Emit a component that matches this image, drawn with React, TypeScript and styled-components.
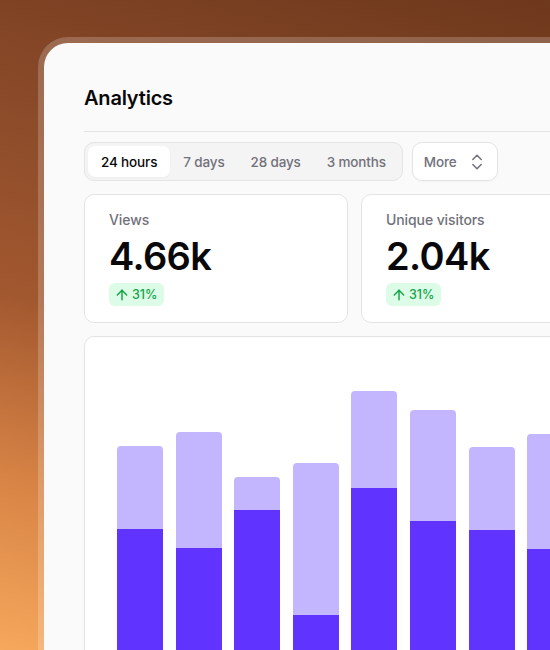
import React from "react";
import styled, { createGlobalStyle } from "styled-components";
import { ChevronsUpDown, ArrowUp } from "lucide-react";

const GlobalStyle = createGlobalStyle`
  html, body {
    margin: 0;
    padding: 0;
    width: 550px;
    height: 650px;
    overflow: hidden;
  }
  body {
    font-family: Inter, "Noto Sans", sans-serif;
    -webkit-font-smoothing: antialiased;
  }
`;

const Backdrop = styled.div`
  width: 550px;
  height: 650px;
  overflow: hidden;
  padding: 37px 0 0 38px;
  box-sizing: border-box;
  background: linear-gradient(
    195deg,
    #6e381c 0%,
    #8a4a29 30%,
    #a2582f 55%,
    #d78345 78%,
    #f6a85c 100%
  );
`;

const Frame = styled.div`
  width: 900px;
  padding: 6px 0 0 6px;
  border-radius: 30px 0 0 0;
  background: rgba(255, 255, 255, 0.2);
`;

const Panel = styled.div`
  background: #fafafa;
  border-radius: 24px 0 0 0;
  padding: 41px 0 0 40px;
  min-height: 700px;
`;

const Header = styled.div`
  padding-bottom: 19px;
  border-bottom: 1px solid #e4e4e7;
`;

const Title = styled.h1`
  margin: 0;
  font-size: 20px;
  line-height: 28px;
  font-weight: 600;
  color: #09090b;
  letter-spacing: -0.2px;
`;

const Toolbar = styled.div`
  display: flex;
  gap: 9px;
  margin-top: 10px;
`;

const Segmented = styled.div`
  display: flex;
  padding: 3px;
  border: 1px solid #e4e4e7;
  border-radius: 10px;
  background: #f4f4f5;
`;

const Tab = styled.button<{ $active?: boolean }>`
  height: 31px;
  padding: 0 13px;
  border: none;
  border-radius: 7px;
  font-family: inherit;
  font-size: 13.5px;
  font-weight: 500;
  letter-spacing: -0.15px;
  color: ${(p) => (p.$active ? "#09090b" : "#71717a")};
  background: ${(p) => (p.$active ? "#ffffff" : "transparent")};
  box-shadow: ${(p) => (p.$active ? "0 1px 2px rgba(0,0,0,0.04)" : "none")};
`;

const SelectButton = styled.button`
  display: flex;
  align-items: center;
  gap: 10px;
  height: 39px;
  padding: 0 10px 0 11px;
  border: 1px solid #e4e4e7;
  border-radius: 10px;
  background: #ffffff;
  font-family: inherit;
  font-size: 13.5px;
  font-weight: 500;
  letter-spacing: -0.15px;
  color: #71717a;
  box-shadow: 0 1px 2px rgba(0, 0, 0, 0.03);
`;

const Stats = styled.div`
  display: grid;
  grid-template-columns: repeat(2, 264px);
  gap: 13px;
  margin-top: 13px;
`;

const StatCard = styled.div`
  background: #ffffff;
  border: 1px solid #e4e4e7;
  border-radius: 10px;
  padding: 15px 24px 16px;
  display: flex;
  flex-direction: column;
  align-items: flex-start;
`;

const StatLabel = styled.div`
  font-size: 14px;
  line-height: 20px;
  font-weight: 500;
  letter-spacing: -0.1px;
  color: #71717a;
`;

const StatValue = styled.div`
  margin-top: 4px;
  font-size: 38px;
  line-height: 44px;
  font-weight: 600;
  letter-spacing: -0.6px;
  color: #09090b;
`;

const Delta = styled.div`
  margin-top: 5px;
  display: flex;
  align-items: center;
  gap: 2px;
  height: 23px;
  padding: 0 7px 0 5px;
  border-radius: 6px;
  background: #dcfce7;
  color: #16a34a;
  font-size: 12.5px;
  font-weight: 500;
`;

const ChartCard = styled.div`
  margin-top: 13px;
  width: 541px;
  box-sizing: border-box;
  background: #ffffff;
  border: 1px solid #e4e4e7;
  border-radius: 10px;
  padding: 40px 0 0 32px;
`;

const Bars = styled.div`
  display: flex;
  align-items: flex-end;
  gap: 12.6px;
  height: 320px;
`;

const Bar = styled.div`
  width: 46px;
  flex-shrink: 0;
  display: flex;
  flex-direction: column;
`;

const Segment = styled.div<{ $kind: "views" | "visitors" }>`
  background: ${(p) => (p.$kind === "views" ? "#c4b6fe" : "#6033ff")};
  border-radius: ${(p) => (p.$kind === "views" ? "4px 4px 0 0" : "0")};
`;

const ranges = ["24 hours", "7 days", "28 days", "3 months"];

const stats = [
  { label: "Views", value: "4.66k", delta: "31%" },
  { label: "Unique visitors", value: "2.04k", delta: "31%" },
];

// [total views, unique visitors] in px of chart height
const series: [number, number][] = [
  [251, 168],
  [265, 149],
  [220, 187],
  [234, 82],
  [306, 209],
  [287, 176],
  [250, 167],
  [263, 148],
  [240, 160],
];

export default function App() {
  return (
    <>
      <GlobalStyle />
      <Backdrop>
        <Frame>
          <Panel>
            <Header>
              <Title>Analytics</Title>
            </Header>
            <Toolbar>
              <Segmented>
                {ranges.map((r, i) => (
                  <Tab key={r} $active={i === 0}>
                    {r}
                  </Tab>
                ))}
              </Segmented>
              <SelectButton>
                More
                <ChevronsUpDown size={20} strokeWidth={1.8} color="#71717a" />
              </SelectButton>
            </Toolbar>
            <Stats>
              {stats.map((s) => (
                <StatCard key={s.label}>
                  <StatLabel>{s.label}</StatLabel>
                  <StatValue>{s.value}</StatValue>
                  <Delta>
                    <ArrowUp size={16} strokeWidth={2.2} />
                    {s.delta}
                  </Delta>
                </StatCard>
              ))}
            </Stats>
            <ChartCard>
              <Bars>
                {series.map(([total, uniq], i) => (
                  <Bar key={i}>
                    <Segment $kind="views" style={{ height: total - uniq }} />
                    <Segment $kind="visitors" style={{ height: uniq }} />
                  </Bar>
                ))}
              </Bars>
            </ChartCard>
          </Panel>
        </Frame>
      </Backdrop>
    </>
  );
}
